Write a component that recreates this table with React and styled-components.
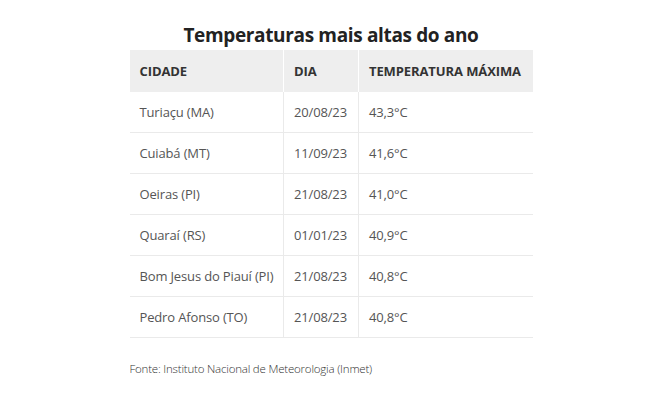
import React from "react";
import styled, { createGlobalStyle } from "styled-components";

const Global = createGlobalStyle`
  html, body { margin: 0; padding: 0; background: #fff; }
  body { font-family: "Open Sans", "Noto Sans", sans-serif; }
`;

const Page = styled.div`
  display: flex;
  justify-content: center;
  padding: 20px 1px 0 0;
`;

const Box = styled.div`
  width: 403px;
  display: flex;
  flex-direction: column;
`;

const Title = styled.h2`
  margin: 0;
  height: 30px;
  font-size: 19px;
  line-height: 30px;
  font-weight: 700;
  color: #222;
  text-align: center;
  letter-spacing: -0.35px;
  white-space: nowrap;
`;

const Table = styled.table`
  border-collapse: collapse;
  width: 100%;
  table-layout: fixed;
`;

const Head = styled.th`
  background: #eeeeee;
  height: 42px;
  padding: 0 6px 0 10px;
  text-align: left;
  font-size: 13px;
  font-weight: 700;
  letter-spacing: -0.1px;
  color: #333;
  text-transform: uppercase;
  white-space: nowrap;
  box-sizing: border-box;
  & + & { border-left: 1px solid #fff; }
`;

const Cell = styled.td`
  height: 40px;
  padding: 0 4px 0 10px;
  font-size: 13px;
  font-weight: 400;
  letter-spacing: -0.15px;
  color: #555;
  white-space: nowrap;
  border-bottom: 1px solid #eaeaea;
  & + & { border-left: 1px solid #eaeaea; }
`;

const Source = styled.p`
  margin: 23px 0 0;
  font-size: 11.5px;
  line-height: 16px;
  font-weight: 300;
  letter-spacing: -0.2px;
  color: #333;
  white-space: nowrap;
`;

const rows = [
  ["Turiaçu (MA)", "20/08/23", "43,3°C"],
  ["Cuiabá (MT)", "11/09/23", "41,6°C"],
  ["Oeiras (PI)", "21/08/23", "41,0°C"],
  ["Quaraí (RS)", "01/01/23", "40,9°C"],
  ["Bom Jesus do Piauí (PI)", "21/08/23", "40,8°C"],
  ["Pedro Afonso (TO)", "21/08/23", "40,8°C"],
];

export default function App() {
  return (
    <>
      <Global />
      <Page>
        <Box>
          <Title>Temperaturas mais altas do ano</Title>
          <Table>
            <colgroup>
              <col style={{ width: 154 }} />
              <col style={{ width: 75 }} />
              <col style={{ width: 174 }} />
            </colgroup>
            <thead>
              <tr>
                <Head>Cidade</Head>
                <Head>Dia</Head>
                <Head>Temperatura máxima</Head>
              </tr>
            </thead>
            <tbody>
              {rows.map((r) => (
                <tr key={r[0]}>
                  {r.map((c, i) => (
                    <Cell key={i}>{c}</Cell>
                  ))}
                </tr>
              ))}
            </tbody>
          </Table>
          <Source>Fonte: Instituto Nacional de Meteorologia (Inmet)</Source>
        </Box>
      </Page>
    </>
  );
}
